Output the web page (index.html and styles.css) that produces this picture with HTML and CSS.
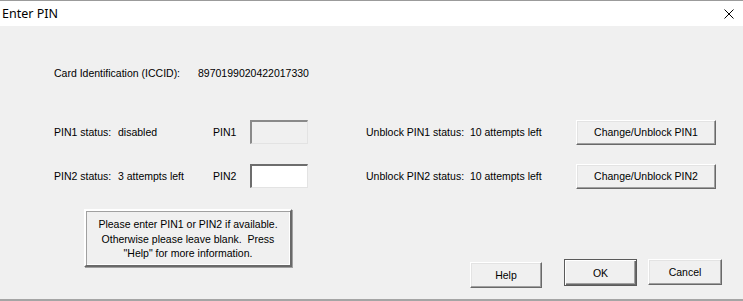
FILE: index.html
```html
<!DOCTYPE html>
<html>
<head>
    <meta charset="utf-8">
    <title>Enter PIN</title>
    <link rel="stylesheet" href="styles.css">
</head>
<body>
    <div class="dialog">
        <div class="title-bar">
            <span class="title">Enter PIN</span>
            <svg class="close" width="10" height="10" viewBox="0 0 10 10">
                <path d="M0.5 0.5 L9.5 9.5 M9.5 0.5 L0.5 9.5" stroke="#000" stroke-width="1"/>
            </svg>
        </div>

        <div class="content">
            <div class="iccid-row">
                <span class="iccid-label">Card Identification (ICCID):</span>
                <span>8970199020422017330</span>
            </div>

            <div class="pin-row first">
                <span class="status-label">PIN1 status:</span>
                <span class="status-value">disabled</span>
                <span class="pin-label">PIN1</span>
                <input class="pin-input disabled" type="text" disabled>
                <span class="unblock-status">Unblock PIN1 status:&nbsp; 10 attempts left</span>
                <button class="btn wide">Change/Unblock PIN1</button>
            </div>

            <div class="pin-row">
                <span class="status-label">PIN2 status:</span>
                <span class="status-value">3 attempts left</span>
                <span class="pin-label">PIN2</span>
                <input class="pin-input" type="text">
                <span class="unblock-status">Unblock PIN2 status:&nbsp; 10 attempts left</span>
                <button class="btn wide">Change/Unblock PIN2</button>
            </div>

            <div class="footer">
                <div class="note">
                    Please enter PIN1 or PIN2 if available.<br>
                    Otherwise please leave blank.&nbsp; Press<br>
                    "Help" for more information.
                </div>
                <div class="actions">
                    <button class="btn help">Help</button>
                    <button class="btn ok">OK</button>
                    <button class="btn cancel">Cancel</button>
                </div>
            </div>
        </div>
    </div>
</body>
</html>
```

FILE: styles.css
```css
* {
    box-sizing: border-box;
}
body {
    margin: 0;
    background: #f0f0f0;
    font-family: "Liberation Sans", Arial, sans-serif;
    font-size: 10.5px;
    color: #000;
}
.dialog {
    width: 743px;
    height: 301px;
    border-top: 1px solid #9b9b9b;
    display: flex;
    flex-direction: column;
}
.title-bar {
    height: 25px;
    background: #fff;
    display: flex;
    align-items: center;
    justify-content: space-between;
    padding: 0 9px 1px 2px;
}
.title {
    font-family: "Noto Sans", sans-serif;
    font-size: 12.5px;
}
.close {
    margin-top: 1px;
}
.content {
    flex: 1;
    background: #f0f0f0;
    border-bottom: 2px solid #a5a5a5;
    padding-left: 54px;
    display: flex;
    flex-direction: column;
}
.iccid-row {
    margin-top: 40px;
    height: 14px;
    line-height: 14px;
    display: flex;
}
.iccid-label {
    width: 144px;
}
.pin-row {
    display: flex;
    align-items: center;
    height: 24px;
    margin-top: 20px;
}
.pin-row.first {
    margin-top: 40px;
}
.status-label {
    width: 64px;
}
.status-value {
    width: 95px;
}
.pin-label {
    width: 37px;
}
.pin-input {
    width: 58px;
    height: 24px;
    margin: 0 58px 0 0;
    padding: 0;
    background: #fff;
    border-style: solid;
    border-width: 2px 1px 1px 2px;
    border-color: #6d6d6d #e3e3e3 #e3e3e3 #6d6d6d;
}
.pin-input.disabled {
    background: #f0f0f0;
    border-color: #8a8a8a #e3e3e3 #e3e3e3 #8a8a8a;
}
.unblock-status {
    width: 210px;
}
.btn {
    font-family: "Liberation Sans", Arial, sans-serif;
    font-size: 10.5px;
    color: #000;
    background: #f0f0f0;
    border: 1px solid;
    border-color: #fff #696969 #696969 #fff;
    box-shadow: inset -1px -1px #a0a0a0, inset 1px 1px #e3e3e3;
    padding: 0;
    height: 25px;
}
.btn.wide {
    width: 140px;
}
.footer {
    display: flex;
    margin-top: 21px;
}
.note {
    width: 208px;
    height: 58px;
    margin-left: 30px;
    text-align: center;
    line-height: 14.5px;
    padding-top: 6px;
    border: 2px solid;
    border-color: #fff #696969 #696969 #fff;
    box-shadow: inset 1px 1px #a0a0a0, inset -1px -1px #fff, 1px 1px #a0a0a0;
}
.actions {
    display: flex;
    align-items: flex-start;
    margin-left: auto;
    margin-right: 21px;
    margin-top: 50px;
}
.btn.help {
    width: 72px;
    height: 26px;
    margin-top: 3px;
}
.btn.ok {
    width: 73px;
    height: 27px;
    margin-left: 22px;
    border: 1px solid #5a5a5a;
    box-shadow: inset 1px 1px #fff, inset -1px -1px #696969, inset -2px -2px #a0a0a0;
}
.btn.cancel {
    width: 74px;
    height: 26px;
    margin-left: 11px;
}
```
